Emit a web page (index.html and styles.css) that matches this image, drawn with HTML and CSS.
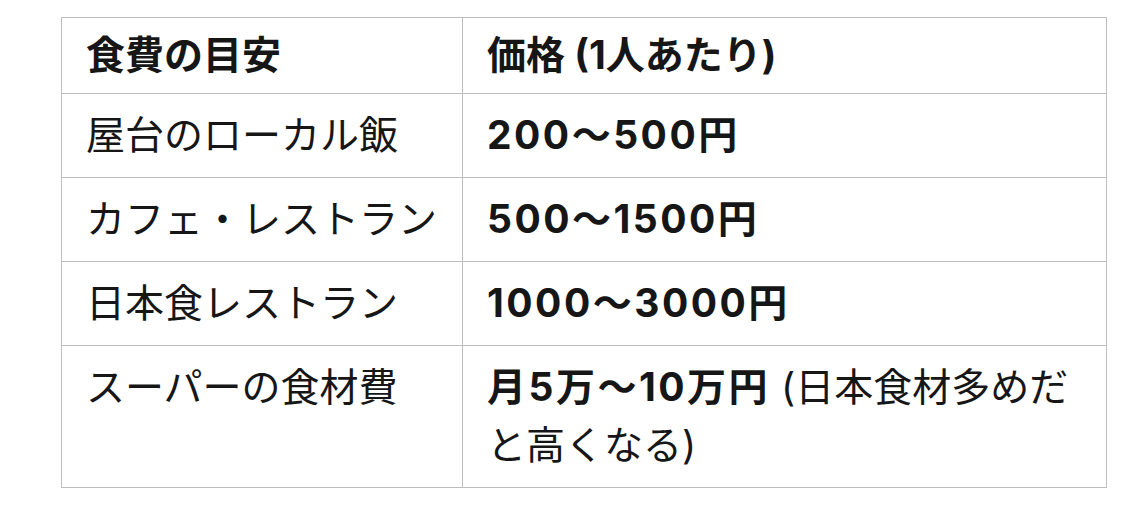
FILE: index.html
```html
<!DOCTYPE html>
<html lang="ja">
<head>
<meta charset="utf-8">
<title>食費の目安</title>
<link rel="stylesheet" href="styles.css">
</head>
<body>
<table class="cost-table">
  <thead>
    <tr>
      <th class="col-item">食費の目安</th>
      <th class="col-price">価格 (1人あたり)</th>
    </tr>
  </thead>
  <tbody>
    <tr>
      <td>屋台のローカル飯</td>
      <td><strong>200〜500円</strong></td>
    </tr>
    <tr>
      <td>カフェ・レストラン</td>
      <td><strong>500〜1500円</strong></td>
    </tr>
    <tr>
      <td>日本食レストラン</td>
      <td><strong>1000〜3000円</strong></td>
    </tr>
    <tr>
      <td>スーパーの食材費</td>
      <td><strong>月5万〜10万円</strong> (日本食材多めだと高くなる)</td>
    </tr>
  </tbody>
</table>
</body>
</html>
```
FILE: styles.css
```css
html, body {
  margin: 0;
  padding: 0;
  background: #ffffff;
}

body {
  padding: 17px 0 0 61px;
  font-family: Inter, "Noto Sans CJK JP", sans-serif;
  color: #161616;
}

.cost-table {
  border-collapse: collapse;
  width: 1046px;
  table-layout: fixed;
  font-size: 39px;
  line-height: 58px;
}

.cost-table th,
.cost-table td {
  border: 1px solid #bdbdbd;
  text-align: left;
  vertical-align: top;
  padding: 12px 10px 13px 24px;
  font-weight: 400;
}

.cost-table th {
  font-weight: 700;
  padding-top: 8px;
  padding-bottom: 9px;
}

.cost-table .col-item {
  width: 366px;
}

.cost-table strong {
  font-weight: 700;
  letter-spacing: 2.5px;
}
```
